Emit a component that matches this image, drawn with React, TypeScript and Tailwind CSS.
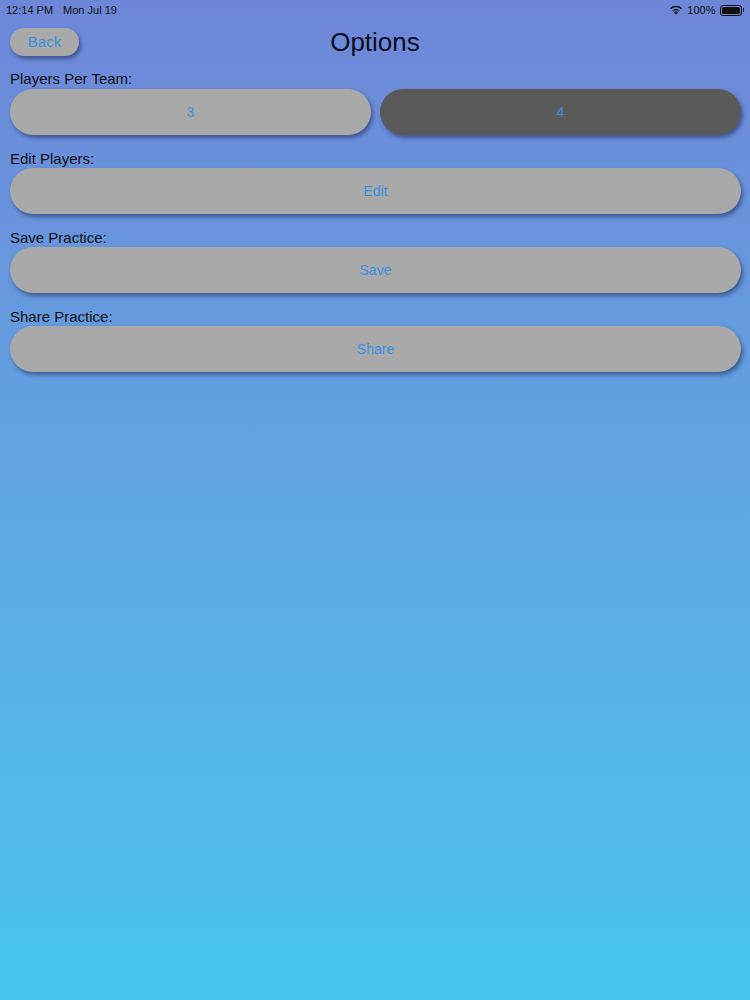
import React from "react";

const font = { fontFamily: '"Helvetica Neue", "Liberation Sans", Arial, sans-serif' };

function Pill({ label, dark = false, className = "" }: { label: string; dark?: boolean; className?: string }) {
  return (
    <div
      className={`h-[46px] rounded-full flex items-center justify-center text-[14px] text-[#3b8ee2] shadow-[2px_3px_4px_rgba(30,40,90,0.55)] ${
        dark ? "bg-[#5a5a5a]" : "bg-[#a9a9a9]"
      } ${className}`}
    >
      {label}
    </div>
  );
}

export default function App() {
  return (
    <div
      className="w-[750px] h-[1000px] bg-gradient-to-b from-[#6e86d8] via-[#5ea6e2] to-[#47c5ef] text-[#111] relative"
      style={font}
    >
      {/* status bar */}
      <div className="h-[20px] px-[6px] flex items-center justify-between text-[11px] font-medium text-[#111]">
        <div className="flex gap-[10px]">
          <span>12:14 PM</span>
          <span>Mon Jul 19</span>
        </div>
        <div className="flex items-center gap-[4px]">
          <svg width="14" height="10" viewBox="0 0 14 10">
            <path d="M7 9.5 L5 7.3 A3 3 0 0 1 9 7.3 Z" fill="#111" />
            <path d="M3.3 5.6 A5.3 5.3 0 0 1 10.7 5.6 L9.7 6.6 A3.9 3.9 0 0 0 4.3 6.6 Z" fill="#111" />
            <path d="M1 3.3 A8.5 8.5 0 0 1 13 3.3 L12 4.3 A7 7 0 0 0 2 4.3 Z" fill="#111" />
          </svg>
          <span>100%</span>
          <div className="flex items-center">
            <div className="w-[22px] h-[11px] rounded-[3px] border border-[#111] p-[1px]">
              <div className="w-full h-full bg-[#111] rounded-[1.5px]" />
            </div>
            <div className="w-[1.5px] h-[4px] bg-[#111] rounded-r-sm ml-[1px]" />
          </div>
        </div>
      </div>

      {/* header */}
      <div className="relative h-[44px] flex items-center justify-center">
        <div className="absolute left-[10px] top-[8px] w-[69px] h-[28px] rounded-full bg-[#a9a9a9] flex items-center justify-center text-[15px] text-[#3b8ee2] shadow-[2px_3px_4px_rgba(30,40,90,0.55)]">
          Back
        </div>
        <div className="text-[26px] mt-[0px] text-[#0c0c1a]">Options</div>
      </div>

      <div className="px-[10px] pr-[9px] flex flex-col">
        <div className="text-[15px] leading-[18px] mt-[6px] mb-[1px]">Players Per Team:</div>
        <div className="flex gap-[9px]">
          <Pill label="3" className="flex-1" />
          <Pill label="4" dark className="flex-1" />
        </div>

        <div className="text-[15px] leading-[18px] mt-[15px]">Edit Players:</div>
        <Pill label="Edit" />

        <div className="text-[15px] leading-[18px] mt-[15px]">Save Practice:</div>
        <Pill label="Save" />

        <div className="text-[15px] leading-[18px] mt-[15px]">Share Practice:</div>
        <Pill label="Share" />
      </div>
    </div>
  );
}
